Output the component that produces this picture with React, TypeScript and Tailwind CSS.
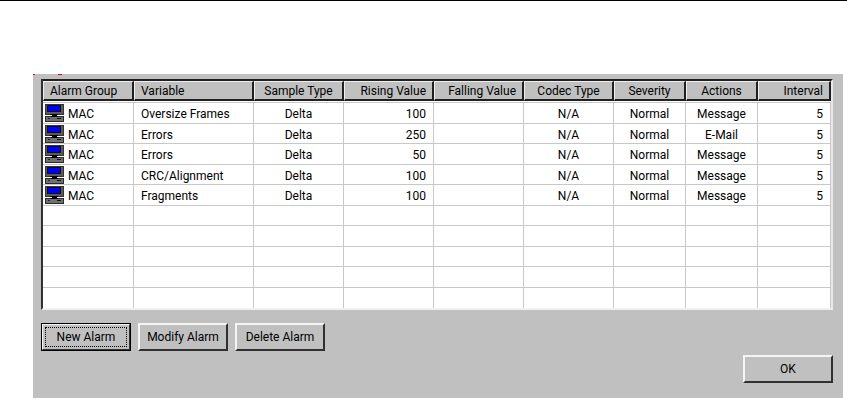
import React from 'react';
import clsx from 'clsx';

type Align = 'left' | 'center' | 'right';

type Column = {
  key: keyof Alarm;
  title: string;
  width: string;
  align: Align;
};

type Alarm = {
  group: string;
  variable: string;
  sampleType: string;
  rising: string;
  falling: string;
  codec: string;
  severity: string;
  action: string;
  interval: string;
};

const COLUMNS: Column[] = [
  { key: 'group', title: 'Alarm Group', width: 'w-[91px]', align: 'left' },
  { key: 'variable', title: 'Variable', width: 'w-[120px]', align: 'left' },
  { key: 'sampleType', title: 'Sample Type', width: 'w-[90px]', align: 'center' },
  { key: 'rising', title: 'Rising Value', width: 'w-[90px]', align: 'right' },
  { key: 'falling', title: 'Falling Value', width: 'w-[90px]', align: 'right' },
  { key: 'codec', title: 'Codec Type', width: 'w-[90px]', align: 'center' },
  { key: 'severity', title: 'Severity', width: 'w-[72px]', align: 'center' },
  { key: 'action', title: 'Actions', width: 'w-[72px]', align: 'center' },
  { key: 'interval', title: 'Interval', width: 'w-[73px]', align: 'right' }
];

const makeAlarm = (variable: string, rising: string, action: string): Alarm => ({
  group: 'MAC',
  variable,
  sampleType: 'Delta',
  rising,
  falling: '',
  codec: 'N/A',
  severity: 'Normal',
  action,
  interval: '5'
});

const ALARMS: Alarm[] = [
  makeAlarm('Oversize Frames', '100', 'Message'),
  makeAlarm('Errors', '250', 'E-Mail'),
  makeAlarm('Errors', '50', 'Message'),
  makeAlarm('CRC/Alignment', '100', 'Message'),
  makeAlarm('Fragments', '100', 'Message')
];

const EMPTY_ROWS = [0, 1, 2, 3, 4];

const ALIGN: Record<Align, string> = {
  left: 'text-left',
  center: 'text-center',
  right: 'text-right'
};

const ComputerIcon: React.FC = () => (
  <svg className="w-[19px] h-[18px] shrink-0" viewBox="0 0 19 18" shapeRendering="crispEdges" aria-hidden="true">
    {/* monitor */}
    <rect x="0" y="0" width="19" height="11" fill="#333" />
    <rect x="1" y="1" width="17" height="9" fill="#5a5a5a" />
    <rect x="2" y="1" width="14" height="7" fill="#111" />
    <rect x="3" y="2" width="12" height="5" fill="#0000ff" />
    {/* stand */}
    <rect x="5" y="10" width="8" height="1" fill="#000" />
    <rect x="7" y="11" width="5" height="1" fill="#000" />
    {/* case */}
    <rect x="0" y="12" width="19" height="6" fill="#2a2a2a" />
    <rect x="1" y="13" width="17" height="4" fill="#707070" />
    <rect x="6" y="12" width="7" height="1" fill="#000" />
    <rect x="12" y="14" width="4" height="1" fill="#111" />
    <rect x="3" y="14" width="2" height="1" fill="#222" />
  </svg>
);

type ButtonProps = {
  children: React.ReactNode;
  isDefault?: boolean;
};

const DialogButton: React.FC<ButtonProps> = ({ children, isDefault }) => (
  <button
    type="button"
    className={clsx(
      'h-7 w-[90px] bg-[#c0c0c0] p-[2px] whitespace-nowrap border-2 border-t-[#f4f4f4] border-l-[#f4f4f4] border-r-[#303030] border-b-[#303030]',
      isDefault && 'outline outline-1 -outline-offset-1 outline-black'
    )}
  >
    <span
      className={clsx(
        'flex h-full items-center justify-center border',
        isDefault ? 'border-dotted border-black' : 'border-transparent'
      )}
    >
      {children}
    </span>
  </button>
);

export default function App() {
  return (
    <div className="min-h-screen bg-white border-t border-black pt-[73px] pb-1 font-['Roboto','Liberation_Sans',sans-serif] text-[12px] leading-4 text-black">
      <main className="relative ml-[33px] mr-1 bg-[#c0c0c0] pt-[5px] pb-[15px] pl-2 pr-[10px]">
        <span className="absolute left-0 top-0 h-px w-[2px] bg-red-600" />
        <span className="absolute left-[25px] top-0 h-px w-1 bg-red-600" />

        {/* Alarm list */}
        <div className="border-2 border-t-[#202020] border-l-[#303030] border-r-[#e8e8e8] border-b-[#f0f0f0] bg-white">
          <table className="h-[227px] w-full table-fixed border-separate border-spacing-0">
            <thead>
              <tr>
                {COLUMNS.map((col) => (
                  <th
                    key={col.key}
                    scope="col"
                    className={clsx(
                      'h-5 bg-[#c0c0c0] px-[6px] pt-px pb-0 font-normal whitespace-nowrap border-t border-l border-b-2 border-r-2 border-t-[#eeeeee] border-l-[#eeeeee] border-r-[#202020] border-b-[#202020]',
                      col.width,
                      ALIGN[col.align]
                    )}
                  >
                    {col.title}
                  </th>
                ))}
              </tr>
              <tr aria-hidden="true">
                <td colSpan={COLUMNS.length} className="h-[2px] p-0 border-b border-[#c8c8c8]" />
              </tr>
            </thead>
            <tbody>
              {ALARMS.map((alarm, rowIndex) => (
                <tr key={rowIndex} className="h-5">
                  {COLUMNS.map((col) => (
                    <td
                      key={col.key}
                      className={clsx(
                        'pb-0 whitespace-nowrap border-r border-b border-[#c8c8c8]',
                        col.key === 'group' ? 'pt-px pl-[2px]' : 'pt-[3px] px-[7px]',
                        ALIGN[col.align]
                      )}
                    >
                      {col.key === 'group' ? (
                        <span className="flex items-end gap-1">
                          <ComputerIcon />
                          {alarm.group}
                        </span>
                      ) : (
                        alarm[col.key]
                      )}
                    </td>
                  ))}
                </tr>
              ))}
              {EMPTY_ROWS.map((row) => (
                <tr key={row} className="h-5">
                  {COLUMNS.map((col) => (
                    <td
                      key={col.key}
                      className={clsx('p-0 border-r border-[#c8c8c8]', row < EMPTY_ROWS.length - 1 && 'border-b')}
                    />
                  ))}
                </tr>
              ))}
            </tbody>
          </table>
        </div>

        {/* Actions */}
        <div className="mt-[13px] flex gap-[7px]">
          <DialogButton isDefault>New Alarm</DialogButton>
          <DialogButton>Modify Alarm</DialogButton>
          <DialogButton>Delete Alarm</DialogButton>
        </div>
        <div className="mt-1 flex justify-end">
          <DialogButton>OK</DialogButton>
        </div>
      </main>
    </div>
  );
}
